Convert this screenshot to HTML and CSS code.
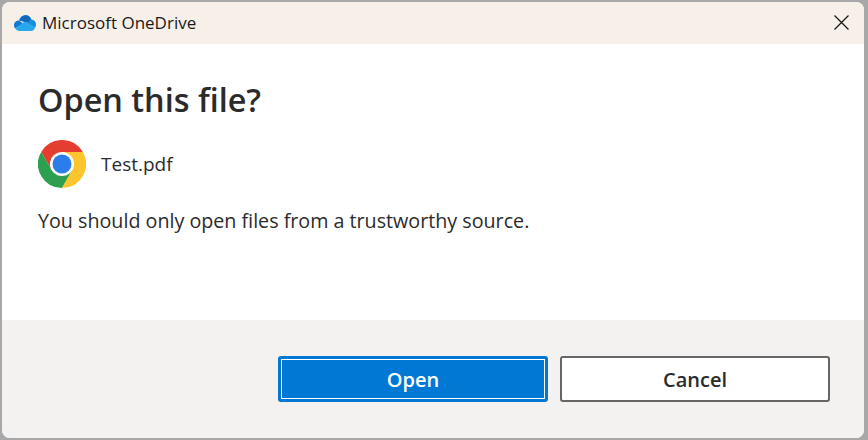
FILE: index.html
```html
<!DOCTYPE html>
<html lang="en">
<head>
    <meta charset="UTF-8">
    <title>Microsoft OneDrive</title>
    <link rel="stylesheet" href="styles.css">
</head>
<body>

    <div class="dialog">
        <!-- Title bar -->
        <div class="title-bar">
            <svg class="cloud-icon" width="22" height="16" viewBox="0 0 22 16">
                <path d="M5 5.500C6.200 2.200 8.500 0 11.500 0c2.800 0 5 1.700 6 4.600L14 8z" fill="#0f6cbd"/>
                <path d="M5 5.500C2.200 5.500 0 7.500 0 10.200c0 1.300.500 2.500 1.300 3.300L9 8.500z" fill="#0f78d4"/>
                <path d="M17.500 4.600c2.500.200 4.500 2.200 4.500 5 0 1.100-.300 2.200-.900 3.200L13 8z" fill="#1490df"/>
                <path d="M1.300 13.500C2.300 15 3.800 16 5.500 16h12c1.600 0 2.900-1.300 3.600-3.200L13 7.500c-1.500-1-3.300-.700-4.500.500z" fill="#28a8ea"/>
            </svg>
            <span class="title-text">Microsoft OneDrive</span>
            <svg class="close-icon" width="15" height="15" viewBox="0 0 15 15">
                <path d="M.5.500 14.500 14.500M14.500.500.500 14.500" stroke="#1a1a1a" stroke-width="1.300" fill="none"/>
            </svg>
        </div>

        <!-- Message -->
        <div class="content">
            <h1>Open this file?</h1>
            <div class="file-row">
                <svg class="chrome-icon" width="48" height="48" viewBox="0 0 48 48">
                    <path d="M24 12H44.800A24 24 0 0 0 3.200 12L13.600 30 24 24z" fill="#e53d30"/>
                    <path d="M3.200 12A24 24 0 0 0 24 48L34.400 30 24 24 13.600 30z" fill="#2e9e4f"/>
                    <path d="M24 48A24 24 0 0 0 44.800 12H24V24L34.400 30z" fill="#fcc52d"/>
                    <circle cx="24" cy="24" r="12" fill="#fff"/>
                    <circle cx="24" cy="24" r="9.500" fill="#2b7de9"/>
                </svg>
                <span class="file-name">Test.pdf</span>
            </div>
            <p class="message">You should only open files from a trustworthy source.</p>
        </div>

        <!-- Buttons -->
        <div class="footer">
            <button class="btn btn-primary">Open</button>
            <button class="btn btn-cancel">Cancel</button>
        </div>
    </div>

</body>
</html>
```

FILE: styles.css
```css
html, body {
    height: 100%;
}
body {
    font-family: 'Open Sans', 'Noto Sans', sans-serif;
    background-color: #a8a8a8; /* What shows around the window */
    margin: 0;
    padding: 2px 4px 2px 2px;
    box-sizing: border-box;
    overflow: hidden;
    color: #2b2b2b;
}
.dialog {
    height: 100%;
    display: flex;
    flex-direction: column;
    background-color: #ffffff;
    border-radius: 8px;
    overflow: hidden;
}
.title-bar {
    height: 42px;
    flex: none;
    box-sizing: border-box;
    display: flex;
    align-items: center;
    background-color: #f7f0e8;
    padding: 0 15px 1px 12px;
}
.cloud-icon {
    margin: 1px 6px 0 0;
}
.title-text {
    font-size: 17px;
    color: #1a1a1a;
}
.close-icon {
    margin-left: auto;
}
.content {
    flex: 1;
    padding: 31px 36px 0;
}
h1 {
    margin: 0;
    font-size: 32.400px;
    line-height: 48px;
    font-weight: 600;
    color: #2b2b2b;
}
.file-row {
    display: flex;
    align-items: center;
    margin-top: 17px;
}
.chrome-icon {
    margin-right: 15px;
}
.file-name {
    font-size: 19px;
}
.message {
    margin: 19px 0 0;
    font-size: 19.700px;
    line-height: 28px;
}
.footer {
    height: 118px;
    flex: none;
    box-sizing: border-box;
    display: flex;
    justify-content: flex-end;
    gap: 12px;
    padding: 36px 34px 0 0;
    background-color: #f3f2f1;
}
.btn {
    width: 270px;
    height: 46px;
    box-sizing: border-box;
    font-family: inherit;
    font-size: 20px;
    font-weight: 600;
    border-radius: 3px;
    cursor: pointer;
}
.btn-primary {
    background-color: #0078d4;
    color: #ffffff;
    border: 3px solid #0078d4;
    outline: 1px solid #ffffff;
    outline-offset: -4px;
}
.btn-cancel {
    background-color: #ffffff;
    color: #2b2b2b;
    border: 2px solid #666666;
}
```
